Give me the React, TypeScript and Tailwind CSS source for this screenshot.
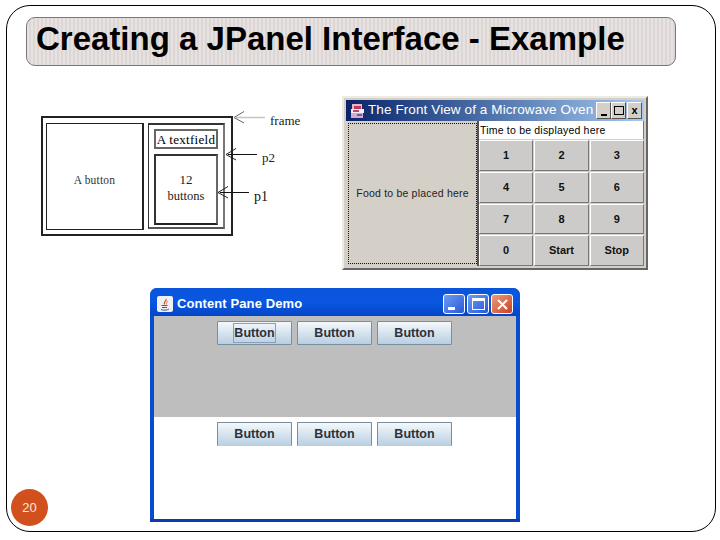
const sans = "font-['Liberation_Sans',Arial,sans-serif]";
const serif = "font-['Liberation_Serif','Times_New_Roman',serif]";

const ovenKeys = ['1', '2', '3', '4', '5', '6', '7', '8', '9', '0', 'Start', 'Stop'];

function Arrow({ x, y, to, gray }: { x: number; y: number; to: number; gray?: boolean }) {
  return (
    <g fill="none" strokeWidth="1">
      <path d={`M${x + 2} ${y + 0.5}H${to}`} stroke={gray ? '#c4c4c4' : '#111'} strokeWidth={gray ? 1.5 : 1} />
      <path d={`M${x + 10} ${y - 5.5}L${x} ${y + 0.5}L${x + 10} ${y + 6}`} stroke={gray ? '#666' : '#222'} />
    </g>
  );
}

function Diagram() {
  return (
    <div className={`absolute left-[41px] top-[116px] w-[270px] h-[120px] text-black ${serif}`}>
      <div className="w-[192px] h-[120px] border-2 border-[#222] bg-white flex gap-[4px] pl-[3px] pr-[6px] pt-[5px] pb-[5px]">
        <div className="w-[98px] h-[107px] border border-[#222] border-r-2 flex items-center justify-center pt-[8px] text-[11.5px] text-[#333] tracking-[0.2px]">
          A button
        </div>
        <div className="flex-1 border-2 border-l border-[#333] border-r-[#777] border-b-[#555] pt-[4px] px-[5px] flex flex-col gap-[5px]">
          <div className="h-[20px] border-2 border-[#666] flex items-center justify-center text-[13px] tracking-[0.3px] leading-none whitespace-nowrap">
            A textfield
          </div>
          <div className="h-[71px] border-2 border-[#333] border-r-[#666] border-b-[#222] flex flex-col items-center justify-center pb-[4px] text-[12.5px] leading-[16px] text-[#222]">
            <span className="text-[13px]">12</span>
            <span>buttons</span>
          </div>
        </div>
      </div>
      <svg className="absolute left-0 top-0 overflow-visible" width="270" height="120" viewBox="0 0 270 120">
        <Arrow x={193} y={1} to={224} gray />
        <Arrow x={185} y={38} to={216} />
        <Arrow x={177} y={76} to={208} />
      </svg>
      <span className="absolute left-[229px] top-[-3px] text-[13px] leading-[16px] text-[#222]">frame</span>
      <span className="absolute left-[221px] top-[34px] text-[13px] leading-[16px] text-[#222]">p2</span>
      <span className="absolute left-[213px] top-[73px] text-[14px] leading-[16px] text-[#111]">p1</span>
    </div>
  );
}

function OvenIcon() {
  return (
    <svg className="shrink-0" width="16" height="16" viewBox="0 0 16 16">
      <rect x="3" y="1" width="10" height="5" fill="#eab4c8" />
      <rect x="5" y="3" width="7" height="3" fill="#c23a5a" />
      <rect x="2" y="6" width="13" height="4" fill="#f4eef2" />
      <rect x="4" y="7" width="6" height="2" fill="#b24a78" />
      <rect x="2" y="10" width="12" height="5" fill="#d8a8d0" />
      <rect x="8" y="11" width="5" height="2" fill="#6a5ab0" />
    </svg>
  );
}

function OvenWindow() {
  const winBtn = 'w-[15px] h-[17px] bg-[#d4d0c8] border border-t-white border-l-white border-r-[#555] border-b-[#555] flex items-center justify-center';
  return (
    <div className={`absolute left-[342px] top-[96px] w-[306px] h-[174px] bg-[#d4d0c8] border-t-2 border-l-2 border-t-[#eeebe4] border-l-[#eeebe4] border-r-2 border-b-2 border-r-[#666] border-b-[#666] p-[2px] flex flex-col ${sans}`}>
      <div className="h-[21px] shrink-0 bg-gradient-to-r from-[#0a246a] to-[#a6caf0] flex items-center pl-[3px] pr-[2px]">
        <OvenIcon />
        <span className="ml-[3px] text-[13.5px] text-white whitespace-nowrap tracking-[0.1px]">The Front View of a Microwave Oven</span>
        <div className="ml-auto flex">
          <div className={`${winBtn} items-end pb-[2px]`}>
            <div className="w-[6px] h-[2px] bg-black" />
          </div>
          <div className={winBtn}>
            <div className="w-[10px] h-[9px] border border-black" />
          </div>
          <div className={`${winBtn} ml-[1px] text-[11px] font-bold leading-none text-black`}>x</div>
        </div>
      </div>
      <div className="flex flex-1 min-h-0">
        <div className="w-[129px] mt-[2px] ml-[2px] mb-[2px] border border-dotted border-[#111] bg-[#d4d0c8] flex items-center justify-center text-[10.5px] text-[#222] tracking-[0.2px] whitespace-nowrap">
          Food to be placed here
        </div>
        <div className="w-[167px] border-l-2 border-[#555] flex flex-col">
          <div className="h-[18px] bg-white border-r border-[#777] pl-[1px] pt-[2px] flex items-center text-[10.5px] text-black tracking-[0.2px] whitespace-nowrap">
            Time to be displayed here
          </div>
          <div className="grid grid-cols-3 grid-rows-4 gap-[1px] flex-1 pt-[1px]">
            {ovenKeys.map((key) => (
              <div key={key} className="bg-[#cccbc9] border-t border-l border-t-white border-l-white border-r border-b border-r-[#777] border-b-[#777] flex items-center justify-center text-[11px] font-bold text-[#111]">
                {key}
              </div>
            ))}
          </div>
        </div>
      </div>
    </div>
  );
}

function JavaIcon() {
  return (
    <div className="w-[16px] h-[16px] shrink-0 rounded-[2px] bg-[#eef0f6] flex items-center justify-center">
      <svg width="12" height="13" viewBox="0 0 12 13" fill="none">
        <path d="M7 1C8 3 4 4 5.500 6.500" stroke="#d8481c" strokeWidth="1.200" />
        <path d="M8.500 3C8 4.500 7 5 7.500 6.500" stroke="#e87a3c" />
        <path d="M2.500 7.500H8.500M3 9.500H8M2 11.500C4 12.500 8 12.500 10 11" stroke="#4a5a8a" />
      </svg>
    </div>
  );
}

function DemoButton({ focus, cut }: { focus?: boolean; cut?: boolean }) {
  return (
    <div className={`w-[75px] h-[24px] border border-[#7a8ea0] bg-gradient-to-b from-[#f4f8fb] to-[#b8cfe2] rounded-[1px] flex items-center justify-center text-[12.5px] font-bold text-[#2d3138] ${cut ? 'border-b-0' : ''}`}>
      <span className={focus ? 'outline outline-1 outline-[#8aa0b8]' : ''}>Button</span>
    </div>
  );
}

function ButtonRow({ cut, focus }: { cut?: boolean; focus?: boolean }) {
  return (
    <div className="flex gap-[5px] pl-[63px]">
      <DemoButton focus={focus} cut={cut} />
      <DemoButton cut={cut} />
      <DemoButton cut={cut} />
    </div>
  );
}

function ContentPaneWindow() {
  const xpBtn = 'w-[22px] h-[20px] rounded-[3px] border border-white flex items-center justify-center';
  return (
    <div className={`absolute left-[150px] top-[288px] w-[370px] h-[234px] rounded-t-[7px] bg-[#0a4ccf] border-b-[3px] border-b-[#0a3cb0] flex flex-col ${sans}`}>
      <div className="h-[28px] shrink-0 rounded-t-[7px] bg-gradient-to-b from-[#0a55dc] via-[#0a56e0] to-[#0445c8] flex items-center pt-[4px] pl-[7px] pr-[7px]">
        <JavaIcon />
        <span className="ml-[4px] text-[13px] font-bold text-white tracking-[0.1px] whitespace-nowrap">Content Pane Demo</span>
        <div className="ml-auto flex gap-[2px]">
          <div className={`${xpBtn} bg-gradient-to-br from-[#6f9cf4] to-[#2a56d8] items-end pb-[3px] justify-start pl-[4px]`}>
            <div className="w-[7px] h-[3px] bg-white" />
          </div>
          <div className={`${xpBtn} bg-gradient-to-br from-[#6f9cf4] to-[#2a56d8]`}>
            <div className="w-[13px] h-[12px] border border-t-[3px] border-white" />
          </div>
          <div className={`${xpBtn} bg-gradient-to-br from-[#ec9a7c] to-[#c8401c]`}>
            <svg width="13" height="13" viewBox="0 0 13 13">
              <path d="M2 2L11 11M11 2L2 11" stroke="#fff" strokeWidth="2" />
            </svg>
          </div>
        </div>
      </div>
      <div className="flex-1 mx-[4px] flex flex-col min-h-0">
        <div className="h-[101px] bg-[#bebebe] pt-[5px]">
          <ButtonRow focus />
        </div>
        <div className="flex-1 bg-white pt-[5px]">
          <ButtonRow cut />
        </div>
      </div>
    </div>
  );
}

export default function App() {
  return (
    <div className={`relative w-[720px] h-[540px] bg-white overflow-hidden ${sans}`}>
      <div className="absolute left-[6px] top-[5px] w-[710px] h-[527px] rounded-[24px] border border-black" />
      <div className="absolute left-[26px] top-[17px] w-[650px] h-[49px] rounded-[9px] border border-[#777] bg-[repeating-linear-gradient(90deg,#e7e2e1_0px,#e7e2e1_2px,#dcd6d5_2px,#dcd6d5_4px)] pl-[9px]">
        <h1 className="text-[33px] leading-[41px] font-bold text-black whitespace-nowrap">Creating a JPanel Interface - Example</h1>
      </div>
      <Diagram />
      <OvenWindow />
      <ContentPaneWindow />
      <div className="absolute left-[11px] top-[489px] w-[37px] h-[37px] rounded-full bg-[#d24f1e] flex items-center justify-center text-[13px] text-[#fbeadf]">
        20
      </div>
    </div>
  );
}
